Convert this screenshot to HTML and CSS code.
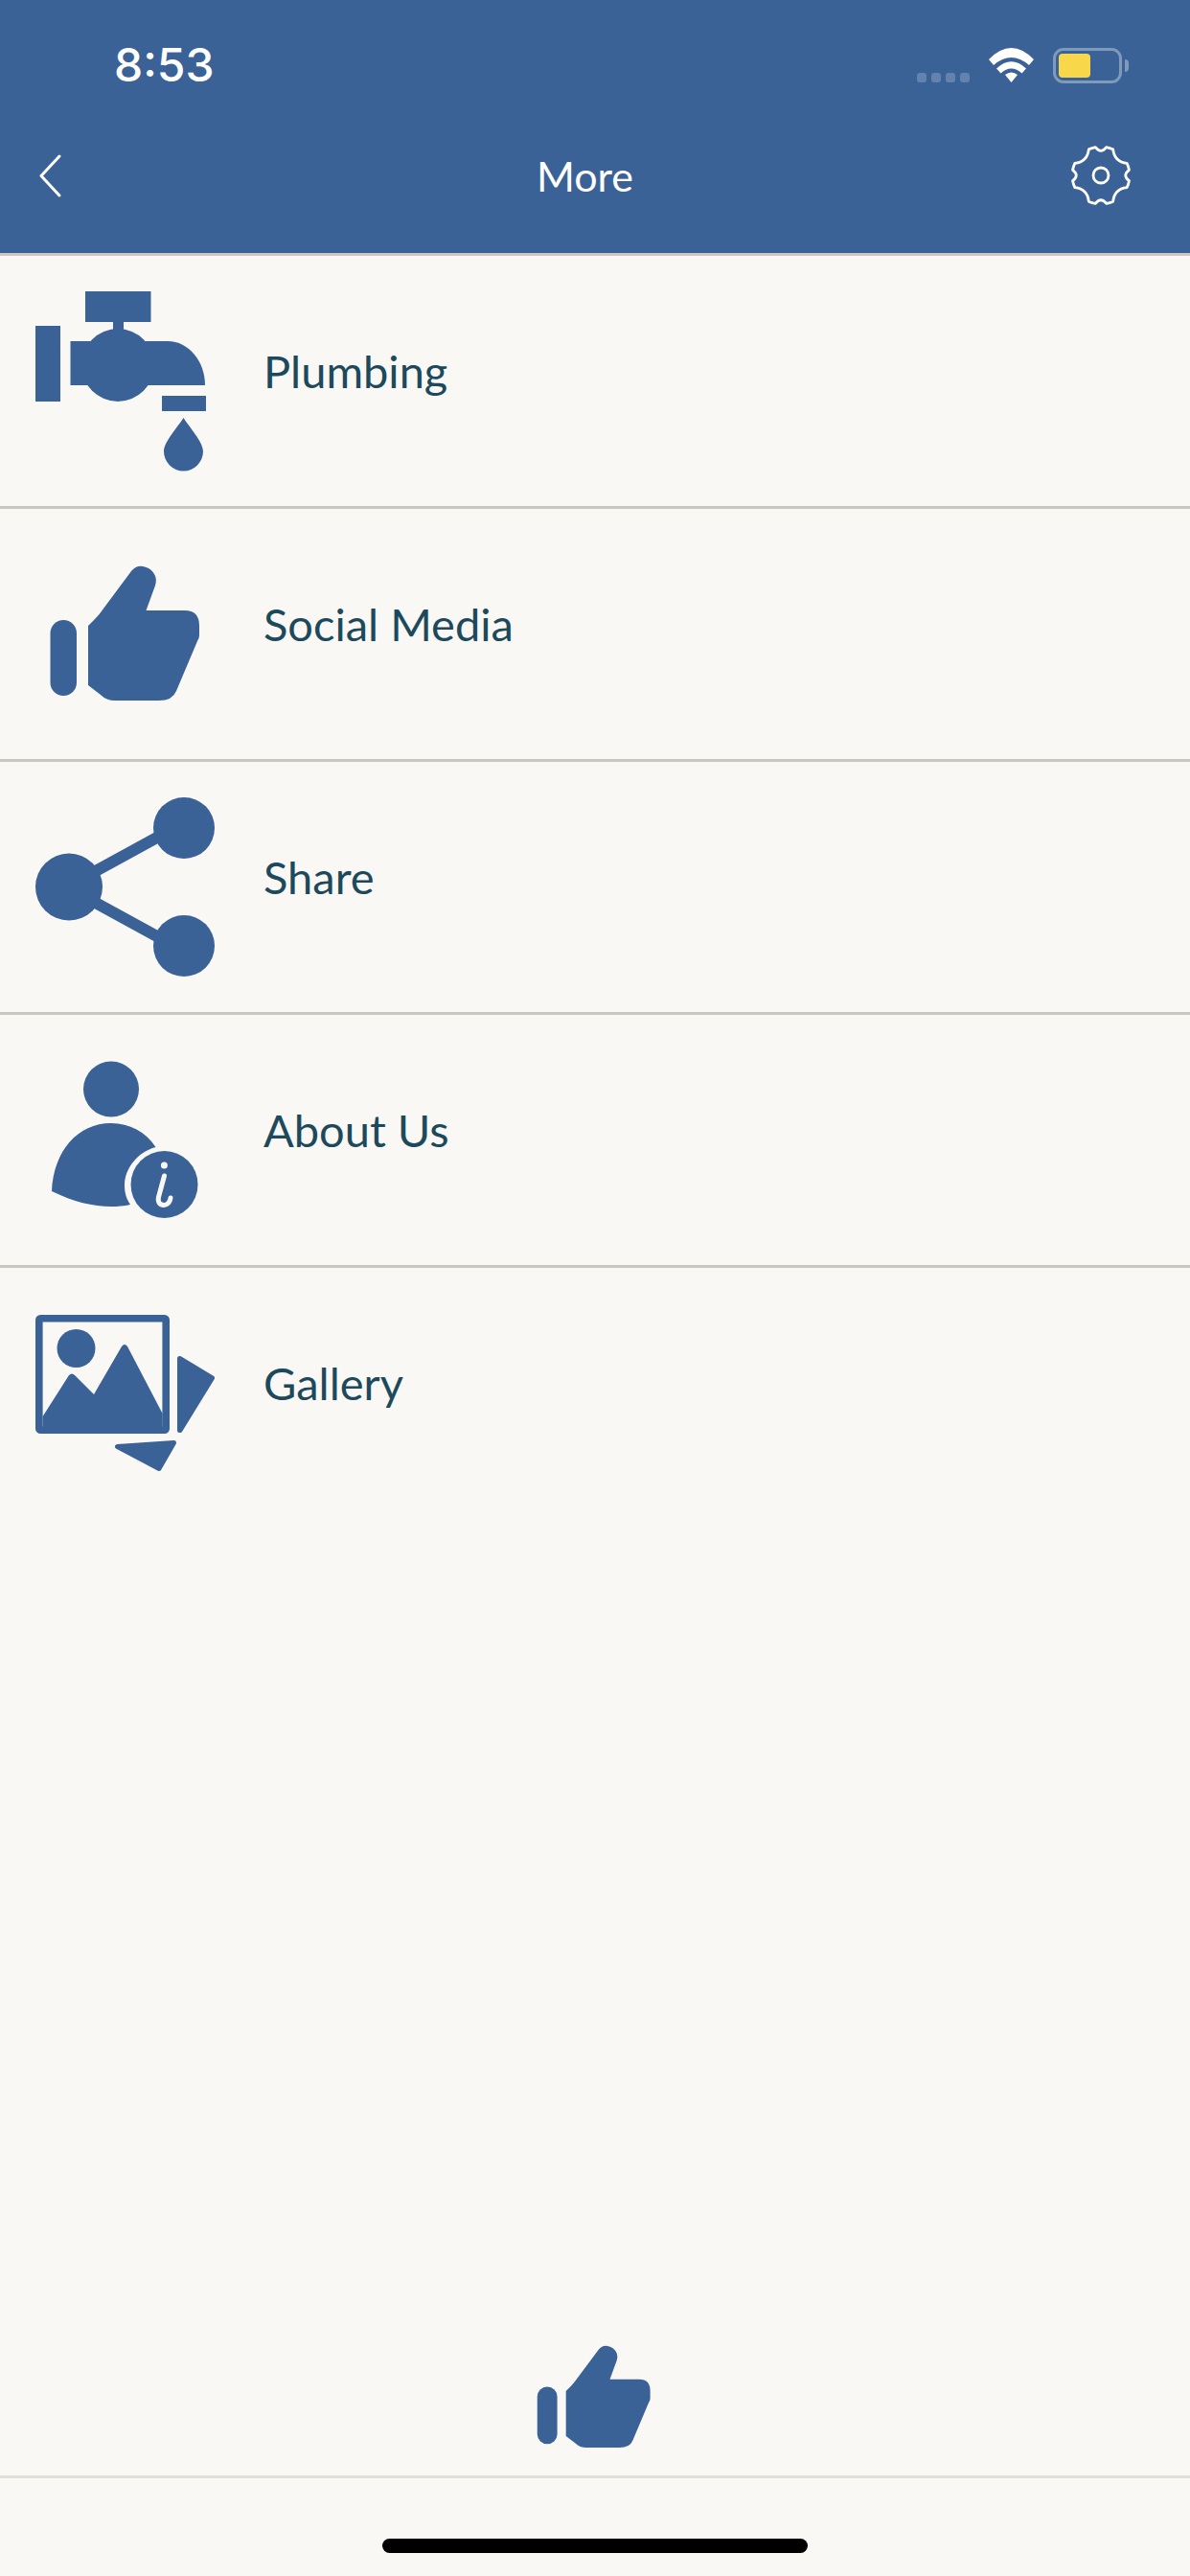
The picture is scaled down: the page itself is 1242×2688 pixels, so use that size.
FILE: index.html
```html
<!DOCTYPE html>
<html lang="en">
<head>
<meta charset="utf-8">
<title>More</title>
<link rel="stylesheet" href="styles.css">
</head>
<body>
<div class="screen">
  <header class="header">
    <div class="status">
      <span class="time">8:53</span>
      <div class="status-icons">
        <div class="signal"><i></i><i></i><i></i><i></i></div>
        <svg class="wifi" viewBox="0 0 47 36"><path d="M0 12Q23.5-12 47 12L42 18Q23.5 2 5 18Z"/><path d="M8 21.5Q23.5 7 39 21.5L34.5 26.5Q23.5 16.5 12.5 26.5Z"/><path d="M17 28Q23.5 23 30 28L23.5 36Z"/></svg>
        <div class="battery"><div class="battery-fill"></div></div>
        <div class="battery-nub"></div>
      </div>
    </div>
    <nav class="nav">
      <svg class="back" viewBox="0 0 24 45"><path d="M22 2L3 22.5L22 43"/></svg>
      <h1 class="title">More</h1>
      <svg class="gear" viewBox="-32 -32 64 64"><path d="M5.72-29.45A30 30 0 0 1 12.68-27.19Q14.14-14.14 27.19-12.68A30 30 0 0 1 29.45-5.72Q22 0 29.45 5.72A30 30 0 0 1 27.19 12.68Q14.14 14.14 12.68 27.19A30 30 0 0 1 5.72 29.45Q0 22-5.72 29.45A30 30 0 0 1-12.68 27.19Q-14.14 14.14-27.19 12.68A30 30 0 0 1-29.45 5.72Q-22 0-29.45-5.72A30 30 0 0 1-27.19-12.68Q-14.14-14.14-12.68-27.19A30 30 0 0 1-5.72-29.45Q0-22 5.72-29.45Z"/><circle r="8"/></svg>
    </nav>
  </header>

  <main class="list">
    <a class="row">
      <svg class="icon" viewBox="0 0 190 200">
        <rect x="52" y="7" width="68.5" height="32"/>
        <rect x="81" y="39" width="11" height="12"/>
        <rect x="0" y="43" width="26" height="79"/>
        <circle cx="86" cy="84" r="38"/>
        <path d="M36.5 59H138C160 59 177 80 177 105H36.5Z"/>
        <rect x="132" y="116" width="46" height="16"/>
        <path d="M154.5 139C160 148 175 164 175 174A20.5 20.5 0 0 1 134 174C134 164 149 148 154.5 139Z"/>
      </svg>
      <span class="label">Plumbing</span>
    </a>
    <a class="row">
      <svg class="icon" viewBox="0 0 190 200">
        <rect x="15.5" y="86" width="27.5" height="79" rx="13.75"/>
        <path d="M55 92L62 85Q67 80 71 74L100 35Q105 29 112 30Q120 31 124 38Q127 43 125 50L115.5 76H156Q171 76 171 92V102Q171 105 169 108L147 160Q143 170 129 170H83Q74 170 68 164L55 154Z"/>
      </svg>
      <span class="label">Social Media</span>
    </a>
    <a class="row">
      <svg class="icon" viewBox="0 0 190 200">
        <circle cx="35" cy="100.5" r="35"/>
        <circle cx="155" cy="39" r="32"/>
        <circle cx="155" cy="162" r="32"/>
        <path class="thick" d="M44 94.2L145 39.1M44 106.8L145 161.9"/>
      </svg>
      <span class="label">Share</span>
    </a>
    <a class="row">
      <svg class="icon" viewBox="0 0 190 200">
        <circle cx="79" cy="47.5" r="29"/>
        <path d="M17 154C19 112 44 83 79 83C98 83 115 92 125.5 108C107 113 93 130 93 148C93 156 95 162 99 168C75 173 48 169 17 154Z"/>
        <circle cx="134.5" cy="147" r="35"/>
        <circle class="cut" cx="134.4" cy="127" r="3.5"/>
        <path class="hook" d="M134.5 138L128.5 160Q127 168 134 168.5Q140 168 141 161"/>
      </svg>
      <span class="label">About Us</span>
    </a>
    <a class="row">
      <svg class="icon" viewBox="0 0 190 200">
        <rect class="frame" x="3.8" y="22.8" width="132.4" height="116.4" rx="1.5"/>
        <circle cx="42.5" cy="54" r="20"/>
        <path d="M7.6 125L35 82Q38 79 41 82L61 102L90 52Q93 48 96 52L132.6 122V140H7.6Z"/>
        <path class="soft" d="M150.5 64.5L184.5 85L151 139.5L150.5 139.5Z"/>
        <path class="soft" d="M85.5 156.5L144.5 152.5L129 179.5Z"/>
      </svg>
      <span class="label">Gallery</span>
    </a>
  </main>

  <section class="promo">
    <svg class="promo-icon" viewBox="0 0 190 200">
      <rect x="15.5" y="86" width="27.5" height="79" rx="13.75"/>
      <path d="M55 92L62 85Q67 80 71 74L100 35Q105 29 112 30Q120 31 124 38Q127 43 125 50L115.5 76H156Q171 76 171 92V102Q171 105 169 108L147 160Q143 170 129 170H83Q74 170 68 164L55 154Z"/>
    </svg>
  </section>
  <footer class="home"><div class="home-bar"></div></footer>
</div>
</body>
</html>
```
FILE: styles.css
```css
* { box-sizing: border-box; }
html, body { margin: 0; padding: 0; }
body { background: #faf8f4; }
.screen { width: 1242px; height: 2688px; display: flex; flex-direction: column; background: #faf8f4; overflow: hidden; }

.header { height: 267px; background: #3a6297; border-bottom: 3px solid #cbc9c1; color: #fff; }
.status { height: 136px; display: flex; align-items: center; justify-content: space-between; padding: 0 64px 0 119px; }
.time { font: 500 48px/1 Inter, "Liberation Sans", sans-serif; }
.status-icons { display: flex; align-items: flex-start; height: 37px; }
.signal { display: flex; gap: 5px; margin-top: 26px; margin-right: 20px; }
.signal i { display: block; width: 10px; height: 10px; border-radius: 3px; background: #6383ae; }
.wifi { width: 47px; height: 36px; margin-right: 20px; fill: #fff; display: block; }
.battery { width: 72px; height: 37px; border: 3px solid #7f9aba; border-radius: 11px; padding: 3px; }
.battery-fill { width: 33px; height: 25px; background: #f9d74b; border-radius: 4px; }
.battery-nub { width: 4px; height: 13px; margin: 12px 0 0 3px; background: #7f9aba; border-radius: 0 6px 6px 0; }

.nav { height: 94px; display: grid; grid-template-columns: 1fr auto 1fr; align-items: center; padding: 0 61px 0 40px; }
.back { width: 24px; height: 45px; fill: none; stroke: #fff; stroke-width: 3; stroke-linecap: round; stroke-linejoin: round; }
.title { margin: 0; font: 400 43px/1 Lato, "Liberation Sans", sans-serif; color: #fff; }
.gear { width: 64px; height: 64px; justify-self: end; fill: none; stroke: #fff; stroke-width: 2.8; stroke-linejoin: round; }

.list { flex: 1; }
.row { display: flex; align-items: center; padding: 30px 0 31px 37px; border-bottom: 3px solid #c9c7c1; }
.row:last-child { border-bottom: 0; }
.icon { display: block; width: 190px; height: 200px; flex: none; fill: #3a6297; }
.label { margin: 0 0 20px 48px; font: 400 47px/1.2 Lato, "Liberation Sans", sans-serif; color: #1c4a5c; }

.thick { fill: none; stroke: #3a6297; stroke-width: 12; }
.cut { fill: #faf8f4; }
.hook { fill: none; stroke: #faf8f4; stroke-width: 5; stroke-linecap: round; }
.frame { fill: none; stroke: #3a6297; stroke-width: 7.6; }
.soft { stroke: #3a6297; stroke-width: 5; stroke-linejoin: round; }

.promo { display: flex; justify-content: center; padding-bottom: 6px; border-bottom: 3px solid #e0dfda; }
.promo-icon { display: block; width: 144px; height: 152px; fill: #3a6297; margin-left: -1px; }
.home { height: 102px; padding-top: 63px; display: flex; justify-content: center; align-items: flex-start; }
.home-bar { width: 444px; height: 15px; border-radius: 8px; background: #000; }
```
